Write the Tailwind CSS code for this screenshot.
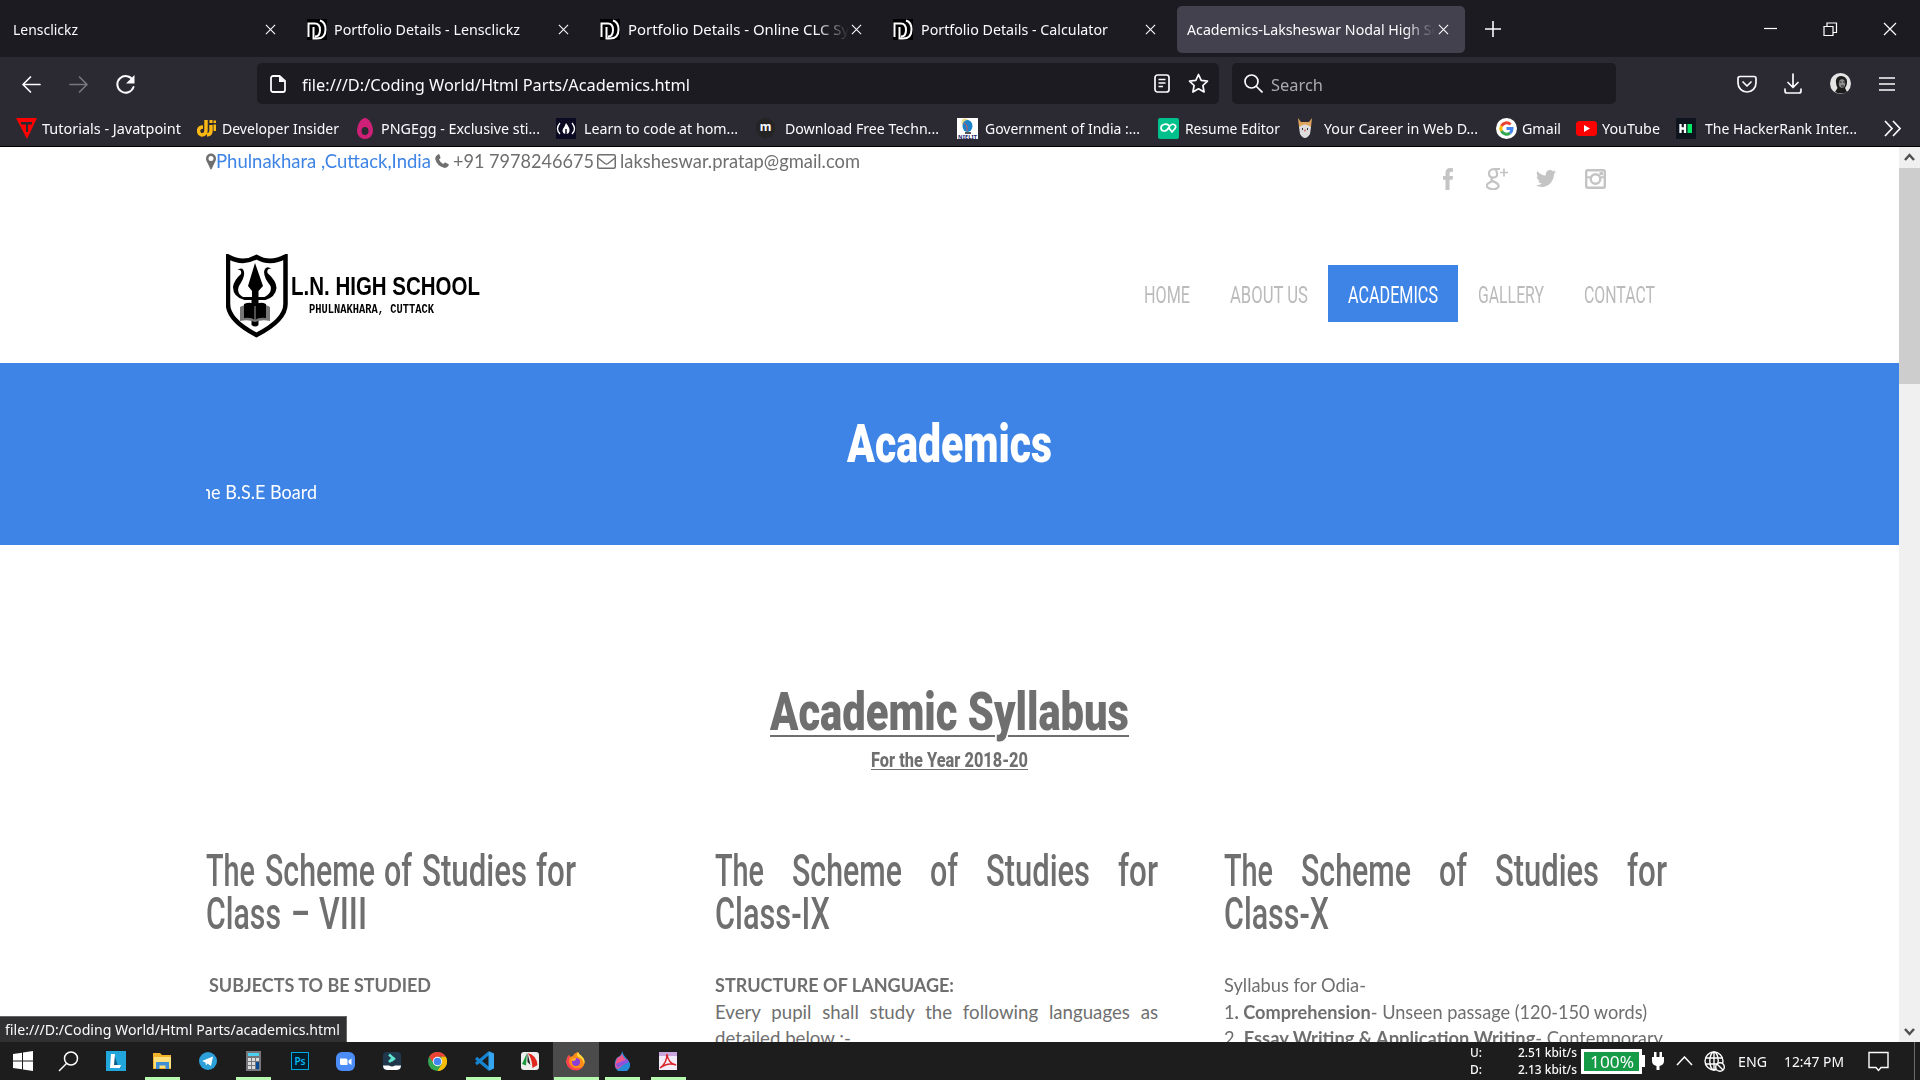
<!DOCTYPE html>
<html lang="en">
<head>
<meta charset="utf-8">
<title>Academics-Laksheswar Nodal High School</title>
<script src="https://cdn.jsdelivr.net/npm/@tailwindcss/browser@4"></script>
</head>
<body class="w-[1920px] h-[1080px] overflow-hidden flex flex-col bg-white font-['Noto_Sans',sans-serif] text-[15px] text-[#fbfbfe]">

<svg class="hidden">
  <symbol id="x" viewBox="0 0 12 12"><path d="M1 1l10 10M11 1L1 11" stroke="currentColor" stroke-width="1.2" fill="none"/></symbol>
  <symbol id="dl" viewBox="0 0 20 21"><path fill="#000" d="M0 0h20v21H0z"/><path d="M1.5 18V4.500H8c3.500 0 5 3 5 6.500s-1.500 6.500-5 6.500M6.500 8v11.500H10c6 0 8.500-4 8.500-9S16.500 2.500 13 1.500" fill="none" stroke="#fff" stroke-width="2"/></symbol>
</svg>

<!-- Tab strip -->
<div class="h-[57px] shrink-0 bg-[#1c1b22] flex items-center pl-[3px] pt-px">
  <div class="w-[294px] flex items-center pl-[10px] pr-[21px] justify-between shrink-0"><span data-fit="65">Lensclickz</span><svg class="size-[11px]"><use href="#x"/></svg></div>
  <div class="w-[293px] flex items-center pl-[10px] pr-[21px] shrink-0"><svg class="w-5 h-[21px] mr-[7px]"><use href="#dl"/></svg><span data-fit="186">Portfolio Details - Lensclickz</span><svg class="size-[11px] ml-auto"><use href="#x"/></svg></div>
  <div class="w-[293px] flex items-center pl-[10px] pr-[21px] shrink-0"><svg class="w-5 h-[21px] mr-[8px] shrink-0"><use href="#dl"/></svg><div class="w-[221px] overflow-hidden mask-r-from-85% mask-r-to-100%"><span data-fit="256">Portfolio Details - Online CLC System</span></div><svg class="size-[11px] ml-auto shrink-0"><use href="#x"/></svg></div>
  <div class="w-[294px] flex items-center pl-[10px] pr-[21px] shrink-0"><svg class="w-5 h-[21px] mr-[8px]"><use href="#dl"/></svg><span data-fit="187">Portfolio Details - Calculator</span><svg class="size-[11px] ml-auto"><use href="#x"/></svg></div>
  <div class="w-[288px] h-[47px] rounded-[5px] bg-[#42414d] flex items-center pl-[10px] pr-[16px] shrink-0"><div class="w-[248px] overflow-hidden mask-r-from-88% mask-r-to-100%"><span data-fit="281">Academics-Laksheswar Nodal High School</span></div><svg class="size-[11px] ml-auto shrink-0"><use href="#x"/></svg></div>
  <svg class="w-4 h-4 ml-[20px]" viewBox="0 0 16 16"><path d="M8 0v16M0 8h16" stroke="#fbfbfe" stroke-width="1.600"/></svg>
  <svg class="w-[133px] h-4 ml-auto mr-[23px]" viewBox="-3 0 133 16"><g fill="none" stroke="#fff" stroke-width="1.200"><path d="M-3 7.500H10"/><path d="M57 5.500h9v9h-9zM60 5.500v-3.500h9.500v9.500h-3.500"/><path d="M117 2l12 12M129 2L117 14"/></g></svg>
</div>

<!-- Navigation toolbar -->
<div class="h-[53px] shrink-0 bg-[#2b2a33] flex items-center text-[16.500px]">
  <svg class="w-[120px] h-6 ml-[20px]" viewBox="0 0 120 24" fill="none" stroke="#fbfbfe" stroke-width="1.700" stroke-linecap="round" stroke-linejoin="round"><path d="M3 12.500h17M10.500 5L3 12.500l7.500 7.500"/><path stroke="#77767e" d="M50 12.500h17M59.500 5l7.500 7.500-7.500 7.500"/><path stroke-width="2" d="M113 8.500A8.300 8.300 0 1 0 113.500 15"/><path fill="#fbfbfe" stroke="none" d="M114.500 3v8.500h-8.500z"/></svg>
  <div class="w-[962px] h-[41px] ml-[117px] rounded-[5px] bg-[#1c1b22] flex items-center pl-[13px] pr-[10px]">
    <svg class="w-4 h-[18px] mr-[16px]" viewBox="0 0 16 18"><path d="M3 1h6.500L15 6v9a2 2 0 0 1-2 2H3a2 2 0 0 1-2-2V3a2 2 0 0 1 2-2z" fill="none" stroke="#fbfbfe" stroke-width="1.800"/><path d="M9 1v6h6z" fill="#fbfbfe"/></svg>
    <span class="mt-[3px]" data-fit="388">file:///D:/Coding World/Html Parts/Academics.html</span>
    <svg class="w-4 h-[19px] ml-auto mr-[18px]" viewBox="0 0 16 19" fill="none" stroke="#fbfbfe" stroke-width="1.700"><rect x="1" y="1" width="14" height="17" rx="2.500"/><path d="M4.500 5.500h7M4.500 9h7M4.500 12.500h4.500"/></svg>
    <svg class="w-[21px] h-[21px]" viewBox="0 0 21 21" fill="none" stroke="#fbfbfe" stroke-width="1.700" stroke-linejoin="round"><path d="M10.500 1.500l2.700 5.800 6.300.8-4.600 4.400 1.200 6.500-5.600-3.200L4.900 19l1.200-6.500L1.500 8.100l6.300-.8z"/></svg>
  </div>
  <div class="w-[384px] h-[41px] ml-[13px] rounded-[5px] bg-[#1c1b22] flex items-center pl-[12px] text-[#a9a9ae]">
    <svg class="w-[19px] h-[19px] mr-[8px]" viewBox="0 0 19 19" fill="none" stroke="#fbfbfe" stroke-width="1.700"><circle cx="7.500" cy="7.500" r="6.500"/><path d="M12 12l6.500 6.500"/></svg>
    <span class="mt-[3px]" data-fit="52">Search</span>
  </div>
  <svg class="w-[20px] h-5 ml-[121px]" viewBox="0 0 20 20" fill="none" stroke="#fbfbfe" stroke-width="1.700" stroke-linecap="round" stroke-linejoin="round"><path d="M3 2.500h14a2 2 0 0 1 2 2V9A9 9 0 0 1 1 9V4.500a2 2 0 0 1 2-2zM6 8l4 4 4-4"/></svg>
  <svg class="w-[18px] h-[21px] ml-[27px]" viewBox="0 0 18 21" fill="none" stroke="#fbfbfe" stroke-width="1.700" stroke-linecap="round" stroke-linejoin="round"><path d="M9 1v13M4 9.500L9 14.500l5-5M1 16v2a2 2 0 0 0 2 2h12a2 2 0 0 0 2-2v-2"/></svg>
  <svg class="w-[21px] h-[21px] ml-[28px]" viewBox="0 0 21 21"><circle cx="10.500" cy="10.500" r="10.500" fill="#e4e4e4"/><path d="M6 7c1-5 8-5 10.500-1 1.500 4-.5 8-1.500 9l2 4q-6 3-12 0l2.500-4Q5.500 11 6 7z" fill="#1c1c1c"/><ellipse cx="12" cy="10.500" rx="3.200" ry="4.300" fill="#8d8d8d"/><path d="M9.500 9h2M13 9h2M11 13h3" stroke="#222"/></svg>
  <svg class="w-4 h-4 ml-[28px]" viewBox="0 0 16 16"><path d="M0 2h16M0 8h16M0 14h16" stroke="#fbfbfe" stroke-width="1.600"/></svg>
</div>

<!-- Bookmarks bar -->
<div class="h-[37px] shrink-0 bg-[#2b2a33] border-b border-black flex items-center pl-[16px]">
  <svg class="w-[21px] h-[21px] mr-[5px]" viewBox="0 0 21 21"><path d="M0 0h21L11 21z" fill="#f00"/><path d="M5 4h11v2.500h-4V14h-2V6.500H5z" fill="#2b2a33"/></svg><span data-fit="139">Tutorials - Javatpoint</span>
  <svg class="w-[19px] h-[18px] ml-[16px] mr-[6px]" viewBox="0 0 19 18"><path d="M9 1v10q0 5-4.500 5Q1.500 15 1.500 11.500 2 8 6 8M14 6v6q0 3.500-4 4" fill="none" stroke="#fdb913" stroke-width="3.400"/><path fill="#fdb913" d="M12.500 1h3v3h-3zM16.500 5.500h2.500V12h-2.500zM16.500 1.500h2.500v2.500h-2.500z"/></svg><span data-fit="117">Developer Insider</span>
  <svg class="w-4 h-[21px] ml-[18px] mr-[8px]" viewBox="0 0 16 21"><path d="M8 0c4 0 8 7 8 13a8 8 0 0 1-16 0C0 7 4 0 8 0z" fill="#cf2078"/><ellipse cx="8" cy="13" rx="3.500" ry="4" fill="#2b2a33"/></svg><span data-fit="159">PNGEgg - Exclusive sti...</span>
  <svg class="w-5 h-[21px] ml-[16px] mr-[8px]" viewBox="0 0 20 21"><path fill="#0a0a23" d="M0 0h20v21H0z"/><path d="M4 5q-5 6 0 11M16 5q5 6 0 11" fill="none" stroke="#fff" stroke-width="1.300"/><path d="M10 5q4 5 3.500 8T10 16t-3.500-3q0-2 2-4.500z" fill="#fff"/><path d="M10 11v5" stroke="#0a0a23" stroke-width="1.500"/></svg><span data-fit="154">Learn to code at hom...</span>
  <span class="w-[19px] h-[20px] rounded-full bg-[#242424] ml-[18px] mr-[10px] text-[12px] leading-[18px] font-bold text-center">m</span><span data-fit="154">Download Free Techn...</span>
  <svg class="w-[21px] h-[21px] ml-[18px] mr-[7px]" viewBox="0 0 21 21"><path fill="#fff" d="M0 0h21v21H0z"/><circle cx="8" cy="4" r="3.500" fill="#e6dc8c"/><ellipse cx="10.500" cy="8" rx="5" ry="6" fill="#1c83c8"/><path d="M7 5q4 2 3 8" stroke="#e05050" fill="none"/><path d="M8 14h6v2H8z" fill="#555"/><text x="1" y="20.500" font-size="5.500" font-weight="bold" textLength="19" fill="#15226b">NIELIT</text></svg><span data-fit="155">Government of India :...</span>
  <svg class="w-[21px] h-[21px] ml-[18px] mr-[6px]" viewBox="0 0 21 21"><rect width="21" height="21" rx="2" fill="#00c08b"/><path d="M11 7.500C7.500 5 3 6.500 3 10s5 4.500 7.500 0 4-4 5.500-3.500 2.500 2 1 4L14 14l-3-4" fill="none" stroke="#fff" stroke-width="1.700"/></svg><span data-fit="95">Resume Editor</span>
  <svg class="w-4 h-[21px] ml-[17px] mr-[11px]" viewBox="0 0 16 21"><path d="M1 0l3 4h8l3-4-1 9H2z" fill="#dfa45c"/><path d="M2 9q6-5 12 0l-1 7q-5 8-10 0z" fill="#ddd"/><path d="M5.500 10v2M10.500 10v2" stroke="#333"/><circle cx="8" cy="12.500" r="1" fill="#d66"/></svg><span data-fit="154">Your Career in Web D...</span>
  <svg class="w-[21px] h-[21px] ml-[18px] mr-[5px]" viewBox="0 0 21 21" fill="none" stroke-width="3"><circle cx="10.500" cy="10.500" r="10.500" fill="#fff"/><path stroke="#ea4335" d="M5.500 8a5.600 5.600 0 0 1 9-1.500"/><path stroke="#fbbc05" d="M5.500 7.900a5.600 5.600 0 0 0 0 5.200"/><path stroke="#34a853" d="M5.500 13a5.600 5.600 0 0 0 8.500 2"/><path stroke="#4285f4" d="M10.500 10.500H16q0 3-2 4.600"/></svg><span data-fit="39">Gmail</span>
  <svg class="w-[21px] h-[15px] ml-[15px] mr-[5px]" viewBox="0 0 21 15"><rect width="21" height="15" rx="3.500" fill="#f00"/><path d="M8 4l6 3.500L8 11z" fill="#fff"/></svg><span data-fit="58">YouTube</span>
  <svg class="w-5 h-[21px] ml-[16px] mr-[9px]" viewBox="0 0 20 21"><path fill="#0e141e" d="M0 0h20v21H0z"/><path d="M4.500 6v9M9 6v9M5 10.500h4" stroke="#fff" stroke-width="2.300"/><path fill="#00ea64" d="M11.500 6H16v9h-4.500z"/></svg><span data-fit="152">The HackerRank Inter...</span>
  <svg class="w-[17px] h-[17px] ml-[27px]" viewBox="0 0 17 17" fill="none" stroke="#fbfbfe" stroke-width="1.700"><path d="M1 1l7 7.500L1 16M9 1l7 7.500L9 16"/></svg>
</div>

<!-- Page viewport -->
<div class="h-[895px] shrink-0 flex relative overflow-hidden">
  <main class="w-[1899px] h-[895px] overflow-hidden bg-white text-[#6f6f6f] font-['Lato',sans-serif] text-[18.670px] leading-[26.670px]">
    <div class="h-[72px] flex items-start pl-[206px] pt-px">
      <svg class="w-[10px] h-[17px] mt-[5px]" viewBox="0 0 10 16"><path fill-rule="evenodd" d="M5 0a5 5 0 0 1 5 5c0 2-1 3.500-2 5.500L5.600 15.500q-.6 1-1.200 0L2 10.500C1 8.500 0 7 0 5a5 5 0 0 1 5-5zm0 2.500a2.500 2.500 0 1 0 0 5 2.500 2.500 0 0 0 0-5z" fill="#6f6f6f"/></svg>
      <span class="text-[#3e84e6]" data-fit="215">Phulnakhara ,Cuttack,India</span>
      <svg class="w-[14px] h-[14px] ml-[4px] mr-[4px] mt-[6px]" viewBox="0 0 14 14"><path d="M3 .5q1-1 1.500.2l1 2.800q.2.800-1.500 2 1.300 3 4.200 4.500 1.300-1.800 2-1.500l3 1.500q1 .5.300 1.800-1.500 2.500-4.500 2Q2 12 .2 5 0 2 3 .5z" fill="#6f6f6f"/></svg>
      <span data-fit="141">+91 7978246675</span>
      <svg class="w-[19px] h-[15px] ml-[3px] mr-[4px] mt-[6px]" viewBox="0 0 19 15" fill="none" stroke="#6f6f6f" stroke-width="1.500"><rect x=".75" y=".75" width="17.500" height="13.500" rx="1.500"/><path d="M1 4l7 5.500q1.500 1 3 0L18 4"/></svg>
      <span data-fit="240">laksheswar.pratap@gmail.com</span>
      <div class="flex items-center ml-[583px] mt-[19px] text-[#c4c4c4] h-[23px]">
        <svg class="w-[10px] h-[22px]" viewBox="0 0 10 22"><path fill="currentColor" d="M10 .2v3.600H8q-1.500 0-1.500 1.500V8H10l-.4 3.700H6.500V22h-4V11.700H0V8h2.500V5Q2.500 0 7.200 0z"/></svg>
        <svg class="w-[22px] h-[23px] ml-[33px]" viewBox="0 0 22 23" fill="none" stroke="currentColor"><path stroke-width="2.200" d="M14 2H8q-5 .5-5 4.500T7.300 10.500 11 6.200 8 2M7 10.500q-3 2-.5 3.500l4 2q4 3 .5 5.200T3 21.200t-.5-5T8 14.500"/><path stroke-width="1.700" d="M18 1.500v8M14 5.500h8"/></svg>
        <svg class="w-[20px] h-[17px] ml-[28px]" viewBox="0 0 20 17"><path fill="currentColor" d="M20 2q-1 1.500-2 2.100C18 12 12 17 6 17q-3.500 0-6-1.800 3.500.2 5.800-1.700-3-.3-3.700-2.900h1.700Q.7 9.500.7 6.300l1.700.5Q-.3 4.500 1.300 1.200 5 5.300 9.800 5.500C9 1 14-1.700 17 1.200q1.500-.3 2.500-1-.4 1.500-1.700 2.300z"/></svg>
        <svg class="w-[21px] h-[20px] ml-[29px]" viewBox="0 0 21 20" fill="none" stroke="currentColor"><rect x="1.200" y="1.200" width="18.600" height="17.600" rx="1.500" stroke-width="2.400"/><circle cx="10.500" cy="10" r="4.800" stroke-width="2.400"/><path d="M2 8.200h4M15 8.200h4" stroke-width="2"/><path d="M14.500 3h3.500v3.200h-3.500z" fill="currentColor" stroke="none"/></svg>
      </div>
    </div>

    <header class="h-[144px] flex items-start pl-[226px]">
      <svg class="w-[62px] h-[84px] mt-[35px]" viewBox="0 0 62 84"><path d="M2 2.500Q17 11 30.500 3 44 11 59.500 2.500V50q0 16-29 31Q2 66 2 50z" fill="#fff" stroke="#000" stroke-width="4.500"/><path d="M29 9l8 23-4.500 5v6h6q8-4 6-11-8-10-6-16 2-5 7-1-5-1-4 4 9 8 9 15-1 9-11 12h-7v25q-3 3-7 0V46h-7Q7 43 7 33q1-7 8-13 1-5-4-4 6-4 7 2 1 5-5 14-3 7 4 11h9v-6l-4-5z" fill="#000"/><path d="M14 53q8-5 15-1 8-4 15 1v14q-8-2-15 1-7-3-15-1z" fill="#777"/><path d="M18 50q7-3 11 1 5-4 11-1v14q-7-1-11 2-4-3-11-2z" fill="#000"/><path d="M29 52v14" stroke="#999"/></svg>
      <div class="ml-[3px] mt-[52px] text-black">
        <div class="font-['Liberation_Sans',sans-serif] font-bold text-[26px] leading-[30px] h-[30px]"><span data-fit="189">L.N. HIGH SCHOOL</span></div>
        <div class="font-['Liberation_Mono',monospace] font-bold text-[13px] leading-[16px] pl-[18px] mt-px"><span data-fit="125">PHULNAKHARA, CUTTACK</span></div>
      </div>
      <nav class="flex ml-[646px] mt-[46px] h-[57px] items-center font-['Roboto',sans-serif] text-[24px] text-[#bbb]">
        <a class="px-5 -ml-[2px] pt-[3px]"><span data-fit="46">HOME</span></a>
        <a class="px-5 pt-[3px]"><span data-fit="78">ABOUT US</span></a>
        <a class="px-5 h-[57px] pt-[3px] bg-[#3e84e6] text-white flex items-center"><span data-fit="90">ACADEMICS</span></a>
        <a class="px-5 pt-[3px]"><span data-fit="66">GALLERY</span></a>
        <a class="px-5 pt-[3px]"><span data-fit="71">CONTACT</span></a>
      </nav>
    </header>

    <section class="h-[182px] bg-[#3e84e6] text-white pt-[51px]">
      <h1 class="flex justify-center font-['Roboto',sans-serif] font-black text-[53px] leading-[60px] h-[60px]"><span data-fit="205">Academics</span></h1>
      <div class="ml-[206px] mt-[5px] w-[1487px] overflow-hidden"><div class="-ml-[5px]"><span data-fit="116">he B.S.E Board</span></div></div>
    </section>

    <section class="pt-[137px] font-['Roboto',sans-serif]">
      <h2 class="flex justify-center font-black text-[53px] leading-[60px]"><span data-fit="359"><span class="underline decoration-2 underline-offset-[5px]">Academic Syllabus</span></span></h2>
      <h4 class="flex justify-center font-extrabold text-[21px] leading-[26px] mt-[5px]"><span data-fit="157"><span class="underline decoration-1 underline-offset-[2px]">For the Year 2018-20</span></span></h4>
    </section>

    <section class="flex pl-[206px] pt-[76px] gap-[66px]">
      <article class="w-[443px] shrink-0">
        <h3 class="font-['Roboto',sans-serif] text-[45px] leading-[43px] font-medium mb-[37px]">
          <div class="flex gap-[9.500px]"><span data-fit="49">The</span><span data-fit="110">Scheme</span><span data-fit="28">of</span><span data-fit="105">Studies</span><span data-fit="40">for</span></div>
          <div class="flex gap-[9.500px]"><span data-fit="75">Class</span><span data-fit="19">–</span><span data-fit="48">VIII</span></div>
        </h3>
        <p class="pl-[3px] font-bold"><span data-fit="222">SUBJECTS TO BE STUDIED</span></p>
      </article>
      <article class="w-[443px] shrink-0">
        <h3 class="font-['Roboto',sans-serif] text-[45px] leading-[43px] font-medium mb-[37px]">
          <div class="flex justify-between"><span data-fit="49">The</span><span data-fit="110">Scheme</span><span data-fit="28">of</span><span data-fit="104">Studies</span><span data-fit="40">for</span></div>
          <div class="flex"><span data-fit="115">Class-IX</span></div>
        </h3>
        <p class="font-bold"><span data-fit="239">STRUCTURE OF LANGUAGE:</span></p>
        <p class="text-justify">Every pupil shall study the following languages as detailed below :-</p>
      </article>
      <article class="w-[443px] shrink-0">
        <h3 class="font-['Roboto',sans-serif] text-[45px] leading-[43px] font-medium mb-[37px]">
          <div class="flex justify-between"><span data-fit="49">The</span><span data-fit="110">Scheme</span><span data-fit="28">of</span><span data-fit="104">Studies</span><span data-fit="40">for</span></div>
          <div class="flex"><span data-fit="105">Class-X</span></div>
        </h3>
        <p><span data-fit="142">Syllabus for Odia-</span></p>
        <p><span data-fit="423">1<b>. Comprehension</b>- Unseen passage (120-150 words)</span></p>
        <p><span data-fit="439">2. <b>Essay Writing &amp; Application Writing</b>- Contemporary</span></p>
      </article>
    </section>
  </main>

  <div class="w-[21px] bg-[#f0f0f0] flex flex-col items-center">
    <svg class="w-[11px] h-[21px]" viewBox="0 0 11 21"><path d="M1 13l4.500-5L10 13" fill="none" stroke="#505050" stroke-width="2.500"/></svg>
    <div class="w-full h-[216px] bg-[#cdcdcd]"></div>
    <svg class="w-[11px] h-[21px] mt-auto" viewBox="0 0 11 21"><path d="M1 8l4.500 5L10 8" fill="none" stroke="#505050" stroke-width="2.500"/></svg>
  </div>
  <div class="absolute left-0 bottom-0 w-[347px] h-[26px] bg-[#313033] border-t border-r border-[#666] pl-[5px] leading-[25px]"><span data-fit="335">file:///D:/Coding World/Html Parts/academics.html</span></div>
</div>

<!-- Taskbar -->
<div class="h-[38px] shrink-0 bg-[#1d1d1d] flex items-stretch">
  <div class="w-[45px] flex items-center justify-center"><svg class="size-5" viewBox="0 0 20 20"><path fill="#fff" d="M0 3l9-1.300v7.800H0zM10 1.500L20 0v9.500H10zM0 10.500h9v7.800L0 17zM10 10.500h10V20l-10-1.500z"/></svg></div>
  <div class="w-[46px] flex items-center justify-center"><svg class="size-[21px]" viewBox="0 0 21 21" fill="none" stroke="#fff" stroke-width="1.500"><circle cx="13" cy="7.500" r="6.500"/><path d="M8.500 12.500L1 20"/></svg></div>
  <div class="w-[47px] flex items-center justify-center pl-[2px]"><svg class="size-5" viewBox="0 0 20 20"><path fill="#22a7dc" d="M0 0h20v20H0z"/><path fill="#0d5c86" d="M8 3l4 12 4 2-9 0z"/><path fill="#fff" d="M5 3h4l-1 11h7l-1 3H4z"/></svg></div>
  <div class="w-[46px] flex items-center justify-center relative pl-[2px]"><svg class="w-[19px] h-4" viewBox="0 0 19 16"><path fill="#f3b32c" d="M0 0h7l2 2h9v14H0z"/><path fill="#ffdf79" d="M1 4h17v11H1z"/><path fill="#3f8fd6" d="M3 9h13v7h-3.500v-3.500h-6V16H3z"/></svg><i class="absolute bottom-0 w-[35px] h-[3px] bg-[#b9fab1]"></i></div>
  <div class="w-[46px] flex items-center justify-center pl-[2px]"><svg class="size-[18px]" viewBox="0 0 18 18"><circle cx="9" cy="9" r="9" fill="#2ba0d9"/><path fill="#fff" d="M3 9l11-4.500L12 14l-3.500-2.500L7 13.500 6.500 10.500z"/></svg></div>
  <div class="w-[46px] flex items-center justify-center relative"><svg class="w-[15px] h-5" viewBox="0 0 15 20"><path fill="#77787b" d="M0 0h15v20H0z"/><path fill="#4ed0f2" d="M2 2h11v3H2z"/><path fill="#ddd" d="M2 7h3v3H2zM6 7h3v3H6zM10 7h3v3h-3zM2 11h3v3H2zM6 11h3v3H6zM2 15h3v3H2zM6 15h3v3H6z"/><path fill="#0b4c96" d="M10 11h3v7h-3z"/></svg><i class="absolute bottom-0 w-[35px] h-[3px] bg-[#b9fab1]"></i></div>
  <div class="w-[46px] flex items-center justify-center pl-[2px]"><span class="w-[18px] h-[18px] border border-[#00a8e0] bg-[#001d2d] text-[#00b8f5] text-[10px] leading-[16px] font-semibold text-center">Ps</span></div>
  <div class="w-[46px] flex items-center justify-center pl-px"><svg class="size-[19px]" viewBox="0 0 19 19"><rect width="19" height="19" rx="6" fill="#4b8cf7"/><path fill="#fff" d="M4 6.500h6q1.500 0 1.500 1.500v5h-6Q4 13 4 11.500zM12.500 8.500l3-2v6.500l-3-2z"/></svg></div>
  <div class="w-[46px] flex items-center justify-center pl-[2px]"><svg class="size-[18px]" viewBox="0 0 18 18"><rect width="18" height="18" rx="4" fill="#21384c"/><path d="M6 2.500l4 3.500-4 4M8 9l4-3" stroke="#5ee6cf" stroke-width="2.500" fill="none"/><path fill="#fff" d="M0 13.500h6q3 2 6 0h6q0 4-4 4.500H4q-4-.5-4-4.500z"/></svg></div>
  <div class="w-[46px] flex items-center justify-center pl-px"><svg class="size-[19px]" viewBox="0 0 20 20"><circle cx="10" cy="10" r="10" fill="#34a853"/><path fill="#ea4335" d="M1.300 5A10 10 0 0 1 18.700 5H10L6 12z"/><path fill="#fbbc05" d="M18.700 5A10 10 0 0 1 10 20l4.500-7.500L14 5z"/><circle cx="10" cy="10" r="5" fill="#fff"/><circle cx="10" cy="10" r="4" fill="#4285f4"/></svg></div>
  <div class="w-[46px] flex items-center justify-center relative pl-px"><svg class="size-5" viewBox="0 0 20 20"><path d="M15 2L2 13M2 7l13 11" stroke="#1784d1" stroke-width="3.200"/><path fill="#35a6f1" d="M14.500 0L20 2.500v15L14.500 20z"/></svg><i class="absolute bottom-0 w-[35px] h-[3px] bg-[#b9fab1]"></i></div>
  <div class="w-[47px] flex items-center justify-center"><svg class="size-[18px]" viewBox="0 0 18 18"><rect width="18" height="18" rx="3" fill="#eee"/><path fill="#199b3c" d="M6 1L1 12l4 1.500z"/><path fill="#222" d="M6.500 1v9l3 3z"/><path fill="#e2261c" d="M6.500 1q9 2 10 12l-5 3Q11 6 6.500 1z"/></svg></div>
  <div class="w-[46px] flex items-center justify-center relative bg-[#4b4b4b]"><svg class="size-5" viewBox="0 0 20 20"><path fill="#ff8b1b" d="M12 1q1 2 3 3.500Q20 9 18 14a9.500 9.500 0 0 1-17.500-2Q0 7 3 4l1 2 3-1q1-3 5-4z"/><path fill="#ffd93b" d="M12 1q1 2 3 3.500Q20 9 18 13q-1-6-6-7-2-2 0-5z"/><path fill="#ff3f55" d="M3 4l1 2q-3 6 2 10 5 3 11 0a9.500 9.500 0 0 1-16.500-4Q0 7 3 4z"/><circle cx="10" cy="11" r="4" fill="#8b3fd9"/><path fill="#ffb52b" d="M5 8l5-1q0 3-3 3z"/></svg><i class="absolute bottom-0 w-[45px] h-[3px] bg-[#b9fab1]"></i></div>
  <div class="w-[46px] flex items-center justify-center relative"><svg class="w-4 h-5" viewBox="0 0 16 20"><path fill="#288bd8" d="M8 0q1 4 5 8t3 7a7.500 6 0 0 1-15 0Q0 9 4 6q4-2 4-6z"/><path fill="#f5568a" d="M3 7q5-2 5-5 0 4 6 8L4 18q-3-1-3-4z"/><path fill="#8b54e0" d="M2 13L13 8l2 3-12 6z"/></svg><i class="absolute bottom-0 w-[35px] h-[3px] bg-[#b9fab1]"></i></div>
  <div class="w-[46px] flex items-center justify-center relative"><svg class="w-[18px] h-[18px]" viewBox="0 0 18 18"><path fill="#f4ecf8" d="M0 0h18v18H0z"/><path fill="#c9a7dd" d="M0 0h18v4H0z"/><path d="M1 16Q8 11 8 2q1 9 9 11Q9 10 1 16z" fill="none" stroke="#d9252a" stroke-width="1.500"/></svg><i class="absolute bottom-0 w-[35px] h-[3px] bg-[#b9fab1]"></i></div>

  <div class="ml-auto flex items-center pr-[5px]">
    <div class="w-[107px] text-[13px] leading-[17px] font-medium mr-[4px]">
      <div class="flex justify-between"><span data-fit="12">U:</span><span data-fit="59">2.51 kbit/s</span></div>
      <div class="flex justify-between"><span data-fit="12">D:</span><span data-fit="59">2.13 kbit/s</span></div>
    </div>
    <div class="w-[61px] h-[25px] border-[3px] border-white bg-[#169b47] flex items-center justify-center text-[17px] leading-none"><span data-fit="44">100%</span></div>
    <div class="w-[3px] h-3 bg-white"></div>
    <svg class="w-[12px] h-[20px] ml-[7px]" viewBox="0 0 12 20"><path fill="#fff" d="M2 1h2.500v5h3V1H10v5h2v4q0 4-4.500 5v4h-3v-4Q0 14 0 10V6h2z"/></svg>
    <svg class="w-[17px] h-[10px] ml-[12px]" viewBox="0 0 17 10"><path d="M1 9l7.500-8L16 9" fill="none" stroke="#fff" stroke-width="1.500"/></svg>
    <svg class="w-[21px] h-[21px] ml-[11px]" viewBox="0 0 21 21" fill="none" stroke="#fff" stroke-width="1.400"><circle cx="10" cy="10" r="9"/><ellipse cx="10" cy="10" rx="4.200" ry="9"/><path d="M1.500 7h17M1.500 13h17M10 1v18"/><circle cx="16" cy="16" r="4.300" fill="#1d1d1d"/><path d="M13 13l6 6"/></svg>
    <span class="ml-[13px] flex"><span data-fit="29">ENG</span></span>
    <span class="ml-[17px] flex"><span data-fit="60">12:47 PM</span></span>
    <svg class="w-[21px] h-[21px] ml-[24px]" viewBox="0 0 21 21"><path d="M1 1.500h19v15h-7l-2.500 3-2.500-3H1z" fill="none" stroke="#fff" stroke-width="1.400"/></svg>
    <div class="w-px h-[38px] bg-[#6a6a6a] ml-[25px]"></div>
  </div>
</div>

<script>
// Scales each label horizontally to the width given in data-fit,
// and again whenever its natural width changes.
const fit = inner => {
  const w = parseFloat(getComputedStyle(inner).width);
  if (w) inner.style.transform = 'scaleX(' + inner.parentNode.dataset.fit / w + ')';
};
const observer = new ResizeObserver(entries => entries.forEach(e => fit(e.target)));
document.querySelectorAll('[data-fit]').forEach(el => {
  const inner = document.createElement('span');
  inner.style.cssText = 'display:inline-block;vertical-align:top;white-space:nowrap;transform-origin:0 50%';
  inner.append(...el.childNodes);
  el.append(inner);
  el.style.cssText = 'display:inline-block;flex:none;vertical-align:top;white-space:nowrap;width:' + el.dataset.fit + 'px';
  fit(inner);
  observer.observe(inner);
});
</script>
</body>
</html>
